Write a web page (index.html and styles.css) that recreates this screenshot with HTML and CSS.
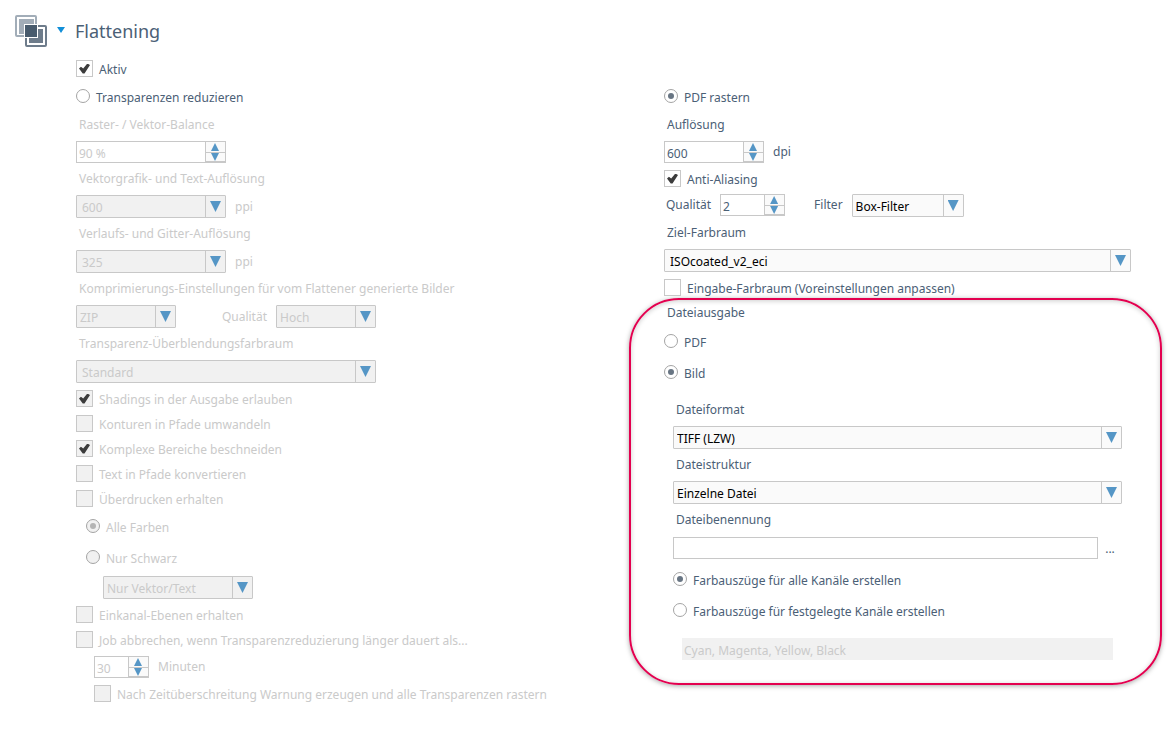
FILE: index.html
```html
<!DOCTYPE html>
<html lang="de">
<head>
<meta charset="utf-8">
<title>Flattening</title>
<link rel="stylesheet" href="styles.css">
</head>
<body>
<main class="page">
  <header class="header">
    <svg class="logo" viewBox="0 0 32 32" aria-hidden="true">
      <rect x="1" y="1" width="20" height="20" rx="1" fill="#fff" stroke="#a2adb8" stroke-width="2"/>
      <rect x="4" y="4" width="15" height="15" fill="#a2adb8"/>
      <rect x="9" y="9" width="23" height="23" fill="#fff"/>
      <rect x="11" y="11" width="20" height="20" rx="1" fill="#fff" stroke="#6e7c8b" stroke-width="2"/>
      <rect x="14" y="14" width="14" height="14" fill="#6e7c8b"/>
      <rect x="9" y="9" width="14" height="14" fill="#fff"/>
      <rect x="10" y="10" width="12" height="12" fill="#485b6d"/>
    </svg>
    <button class="toggle" type="button" aria-label="Flattening einklappen"></button>
    <h1 class="title">Flattening</h1>
  </header>

  <form class="columns">
    <section class="column">
      <label class="check"><input type="checkbox" checked>Aktiv</label>
      <label class="radio radio-first"><input type="radio" name="mode">Transparenzen reduzieren</label>

      <label class="caption off" for="balance">Raster- / Vektor-Balance</label>
      <div class="spinner w150 off">
        <input id="balance" type="text" value="90 %" disabled>
        <button class="up" type="button" aria-label="Mehr"></button>
        <button class="down" type="button" aria-label="Weniger"></button>
      </div>

      <label class="caption off" for="vector">Vektorgrafik- und Text-Auflösung</label>
      <div class="line off">
        <div class="select w150 inset"><select id="vector" disabled><option>600</option></select></div>
        <span>ppi</span>
      </div>

      <label class="caption off" for="mesh">Verlaufs- und Gitter-Auflösung</label>
      <div class="line off">
        <div class="select w150 inset"><select id="mesh" disabled><option>325</option></select></div>
        <span>ppi</span>
      </div>

      <label class="caption off" for="zip">Komprimierungs-Einstellungen für vom Flattener generierte Bilder</label>
      <div class="line pair off">
        <div class="select w100"><select id="zip" disabled><option>ZIP</option></select></div>
        <label for="quality">Qualität</label>
        <div class="select w100"><select id="quality" disabled><option>Hoch</option></select></div>
      </div>

      <label class="caption off" for="blend">Transparenz-Überblendungsfarbraum</label>
      <div class="select w300 inset"><select id="blend" disabled><option>Standard</option></select></div>

      <div class="stack">
        <label class="check off"><input type="checkbox" checked disabled>Shadings in der Ausgabe erlauben</label>
        <label class="check off"><input type="checkbox" disabled>Konturen in Pfade umwandeln</label>
        <label class="check off"><input type="checkbox" checked disabled>Komplexe Bereiche beschneiden</label>
        <label class="check off"><input type="checkbox" disabled>Text in Pfade konvertieren</label>
        <label class="check off"><input type="checkbox" disabled>Überdrucken erhalten</label>
      </div>
      <div class="suboptions">
        <label class="radio off"><input type="radio" name="overprint" checked disabled>Alle Farben</label>
        <label class="radio off"><input type="radio" name="overprint" disabled>Nur Schwarz</label>
        <div class="select w150 black"><select aria-label="Nur Schwarz" disabled><option>Nur Vektor/Text</option></select></div>
      </div>
      <div class="stack">
        <label class="check off"><input type="checkbox" disabled>Einkanal-Ebenen erhalten</label>
        <label class="check off"><input type="checkbox" disabled>Job abbrechen, wenn Transparenzreduzierung länger dauert als...</label>
      </div>
      <div class="timeout">
        <div class="line off">
          <div class="spinner w55">
            <input id="minutes" type="text" value="30" disabled>
            <button class="up" type="button" aria-label="Mehr"></button>
            <button class="down" type="button" aria-label="Weniger"></button>
          </div>
          <label for="minutes">Minuten</label>
        </div>
        <div class="stack">
          <label class="check off"><input type="checkbox" disabled>Nach Zeitüberschreitung Warnung erzeugen und alle Transparenzen rastern</label>
        </div>
      </div>
    </section>

    <section class="column column-right">
      <label class="radio radio-first"><input type="radio" name="mode" checked>PDF rastern</label>

      <label class="caption" for="dpi">Auflösung</label>
      <div class="line">
        <div class="spinner w100">
          <input id="dpi" type="text" value="600">
          <button class="up" type="button" aria-label="Mehr"></button>
          <button class="down" type="button" aria-label="Weniger"></button>
        </div>
        <span>dpi</span>
      </div>
      <div class="stack">
        <label class="check"><input type="checkbox" checked>Anti-Aliasing</label>
      </div>
      <div class="line aliasing">
        <label for="aa">Qualität</label>
        <div class="spinner w65">
          <input id="aa" type="text" value="2">
          <button class="up" type="button" aria-label="Mehr"></button>
          <button class="down" type="button" aria-label="Weniger"></button>
        </div>
        <label class="filter" for="filter">Filter</label>
        <div class="select w112"><select id="filter"><option>Box-Filter</option></select></div>
      </div>

      <label class="caption" for="space">Ziel-Farbraum</label>
      <div class="select inset"><select id="space"><option>ISOcoated_v2_eci</option></select></div>
      <div class="stack">
        <label class="check"><input type="checkbox">Eingabe-Farbraum (Voreinstellungen anpassen)</label>
      </div>

      <section class="output">
        <h2 class="caption heading">Dateiausgabe</h2>
        <label class="radio"><input type="radio" name="kind">PDF</label>
        <label class="radio"><input type="radio" name="kind" checked>Bild</label>
        <div class="image">
          <label class="caption" for="format">Dateiformat</label>
          <div class="select"><select id="format"><option>TIFF (LZW)</option></select></div>
          <label class="caption" for="structure">Dateistruktur</label>
          <div class="select"><select id="structure"><option>Einzelne Datei</option></select></div>
          <label class="caption" for="naming">Dateibenennung</label>
          <div class="naming">
            <input id="naming" class="field" type="text">
            <button class="more" type="button" aria-label="Dateibenennung bearbeiten">...</button>
          </div>
          <div class="channels">
            <label class="radio"><input type="radio" name="channels" checked>Farbauszüge für alle Kanäle erstellen</label>
            <label class="radio"><input type="radio" name="channels">Farbauszüge für festgelegte Kanäle erstellen</label>
          </div>
          <input class="inks" type="text" value="Cyan, Magenta, Yellow, Black" aria-label="Festgelegte Kanäle" disabled>
        </div>
      </section>
    </section>
  </form>
</main>
</body>
</html>
```
FILE: styles.css
```css
:root {
  --text: #4b6076;
  --muted: #cacaca;
  --line: #c8c8c8;
  --arrow: #5596c6;
  --accent: #e3004f;
}

* { box-sizing: border-box; }

body {
  margin: 0;
  background: #fff;
  color: var(--text);
  font: 12px/16px "Noto Sans", "Open Sans", sans-serif;
}

input, select, button {
  margin: 0;
  font: inherit;
  color: inherit;
}

.page { padding: 15px 45px 24px 15px; }

.header {
  display: flex;
  align-items: center;
  height: 41px;
  padding-bottom: 9px;
}

.logo { width: 32px; height: 32px; margin-right: 10px; }

.toggle {
  width: 8px;
  height: 6px;
  margin: 0 10px 2px 0;
  padding: 0;
  border: 0;
  background: #128fd8;
  clip-path: polygon(0 0, 100% 0, 50% 100%);
}

.title { margin: 0; font-size: 18px; font-weight: 400; line-height: 32px; }

.columns {
  display: grid;
  grid-template-columns: minmax(0, 588fr) minmax(0, 467fr);
  padding-left: 61px;
}

.column-right { padding-top: 25px; }

.off { color: var(--muted); }

.caption {
  display: flex;
  align-items: center;
  height: 32px;
  margin: 0;
  padding-left: 3px;
  font-size: 12px;
  font-weight: 400;
}

.check, .radio { display: flex; align-items: center; gap: 6px; }
.check { height: 25px; padding-top: 3px; }
.radio { height: 31px; padding-top: 3px; }
.radio-first { height: 28px; padding-top: 6px; }
.stack { padding-top: 3px; }

.check input, .radio input {
  appearance: none;
  flex: none;
  display: grid;
  place-items: center;
  margin-bottom: 3px;
  border: 1px solid var(--line);
  background: #fff;
}

.check input { width: 17px; height: 17px; }
.check input:disabled { background: #f1f1f1; }

.check input:checked::before {
  content: "";
  width: 11px;
  height: 10px;
  background: #3c3c3c;
  clip-path: polygon(0 50%, 18% 32%, 38% 50%, 76% 0, 100% 16%, 50% 100%, 34% 100%);
}

.radio input {
  width: 14px;
  height: 14px;
  margin-bottom: 5px;
  border-color: #a4a4a4;
  border-radius: 50%;
}

.radio input:disabled { background: #f1f1f1; }

.radio input:checked::before {
  content: "";
  width: 6px;
  height: 6px;
  border-radius: 50%;
  background: #687583;
}

.radio input:checked:disabled::before { background: #b4b4b4; }

.line { display: flex; align-items: center; gap: 9px; }

.w55 { width: 55px; }
.w65 { width: 65px; }
.w100 { width: 100px; }
.w112 { width: 112px; }
.w150 { width: 150px; }
.w300 { width: 300px; }

.select { position: relative; height: 23px; }

.select select {
  appearance: none;
  width: 100%;
  height: 23px;
  padding: 2px 24px 0 3px;
  border: 1px solid var(--line);
  border-radius: 1px;
  background: #fafafa;
  color: #000;
}

.inset select { padding-left: 5px; }

.select select:disabled {
  background: #f1f1f1;
  color: var(--muted);
  opacity: 1;
}

.select::before {
  content: "";
  position: absolute;
  inset: 1px 20px 1px auto;
  width: 1px;
  background: var(--line);
}

.select::after {
  content: "";
  position: absolute;
  top: 6px;
  right: 5px;
  width: 11px;
  height: 11px;
  background: var(--arrow);
  clip-path: polygon(0 0, 100% 0, 50% 100%);
  pointer-events: none;
}

.spinner {
  display: grid;
  grid-template: 10px 10px / minmax(0, 1fr) 20px;
  border: 1px solid var(--line);
}

.spinner input {
  grid-row: 1 / 3;
  width: 100%;
  padding: 3px 2px 0;
  border: 0;
  background: #fff;
}

.spinner button {
  display: grid;
  place-items: center;
  padding: 0 1px 0 0;
  border: 0 solid var(--line);
  border-left-width: 1px;
  background: #fafafa;
}

.spinner .down { border-top-width: 1px; border-bottom-width: 1px; }

.spinner button::before {
  content: "";
  width: 8px;
  height: 8px;
  background: var(--arrow);
}

.up::before { clip-path: polygon(50% 0, 100% 100%, 0 100%); }
.down::before { clip-path: polygon(0 0, 100% 0, 50% 100%); }

.pair { gap: 0; }
.pair label { width: 100px; padding-right: 9px; text-align: right; }

.suboptions { padding-left: 10px; }
.black { margin: 3px 0 0 17px; }

.timeout { padding: 4px 0 0 18px; }

.aliasing { align-items: flex-start; padding: 3px 0 0 2px; }
.aliasing label { line-height: 22px; }
.aliasing .filter { margin-left: 20px; }

.output {
  margin: -2px -31px 0 -35px;
  padding: 0 29px 23px 33px;
  border: 2px solid var(--accent);
  border-radius: 50px;
  box-shadow: 0 1px 5px rgba(0, 0, 0, .35), inset 0 1px 5px rgba(0, 0, 0, .2);
}

.heading { height: 26px; }

.image { padding: 6px 9px 0; }

.naming { display: flex; align-items: center; padding-top: 1px; }

.field {
  flex: 1;
  min-width: 0;
  height: 22px;
  padding: 0 4px;
  border: 1px solid var(--line);
}

.more {
  width: 24px;
  padding: 2px 0 0;
  border: 0;
  background: none;
}

.channels { padding-top: 5px; }

.inks {
  display: block;
  width: calc(100% - 18px);
  height: 22px;
  margin: 12px 9px 0;
  padding: 3px 2px 0;
  border: 0;
  background: #f1f1f1;
  color: var(--muted);
}
```
